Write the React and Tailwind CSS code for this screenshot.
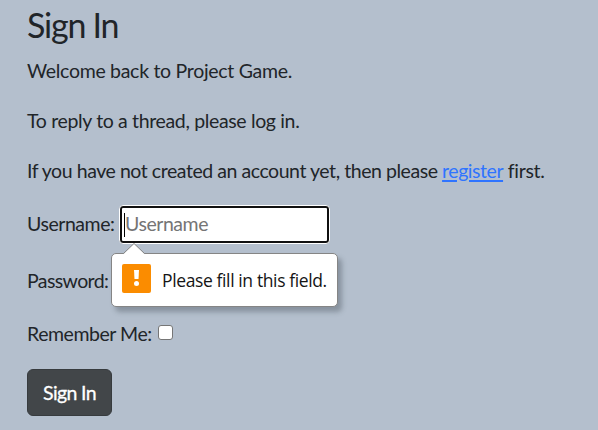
export default function App() {
  return (
    <main className="h-[430px] w-[598px] overflow-hidden bg-[#b4bfcd] pl-[27px] font-['Gill_Sans','Gill_Sans_MT',Lato,sans-serif] text-[19.5px] tracking-[-0.45px] text-[#212529] whitespace-nowrap">
      <h1 className="flex h-[46px] items-center pt-[3px] text-[34px] leading-[46px] tracking-[-1.25px]">
        <span>Sign In</span>
      </h1>
      <p className="leading-[50px] tracking-[-0.3px]"><span>Welcome back to Project Game.</span></p>
      <p className="leading-[50px] tracking-[-0.35px]"><span>To reply to a thread, please log in.</span></p>
      <p className="h-[51px] leading-[50px]">
        <span>If you have not created an account yet, then please </span>
        <a href="#register" className="text-[#2f74ff] underline decoration-2 underline-offset-2">register</a>
        <span className="tracking-[-0.3px]"> first.</span>
      </p>
      <form>
        <div className="flex h-[55px] items-center">
          <label className="w-[92px] -translate-y-px"><span>Username:</span></label>
          <div className="relative">
            <div className="flex h-[39px] w-[211px] items-center rounded-[4px] border border-white bg-[#101010] p-[2px]">
              <div className="flex h-full w-full items-center rounded-[1px] bg-white pl-[2px] text-[#757575]">
                <span className="h-6 w-px bg-black" />
                <span className="-translate-y-px">Username</span>
              </div>
            </div>
            <div role="alert" className="absolute top-[48px] left-[-8px] z-10 flex h-[54px] w-[227px] items-center rounded-[5px] border border-[#858585] bg-white pl-[10px] shadow-[4px_5px_5px_rgba(70,80,90,0.4)]">
              <svg className="absolute -top-[11px] left-[11px]" width="22" height="12" viewBox="0 0 22 12">
                <path d="M0 11.5 11 0.5 22 11.5V12H0Z" fill="white" />
                <path d="M0.5 10.5 11 0.5 21.5 10.5" fill="none" stroke="#858585" />
              </svg>
              <svg className="mb-[3px] shrink-0" width="29" height="29" viewBox="0 0 29 29">
                <rect width="29" height="29" rx="2" fill="#fb8c00" />
                <path d="M12 6H17L16.5 15H12.5Z" fill="white" />
                <circle cx="14.5" cy="19.5" r="2.5" fill="white" />
              </svg>
              <span className="ml-[11px] font-['Segoe_UI','Open_Sans',sans-serif] text-[17.5px] tracking-[-0.38px] text-[#151515]">Please fill in this field.</span>
            </div>
          </div>
        </div>
        <div className="flex h-[58px] items-center tracking-[-0.6px]"><label><span>Password:</span></label></div>
        <div className="flex h-[48px] items-center">
          <label className="w-[131px]"><span>Remember Me:</span></label>
          <span role="checkbox" aria-checked="false" className="mb-[4px] h-[15px] w-[15px] rounded-[3px] border border-[#767676] bg-white" />
        </div>
        <button type="button" className="mt-[11px] flex h-[47px] w-[85px] items-center justify-center rounded-[6px] border border-[#373b3e] bg-[#424649] tracking-[-0.65px] text-white [-webkit-text-stroke:0.3px_white]">
          <span>Sign In</span>
        </button>
      </form>
    </main>
  );
}
